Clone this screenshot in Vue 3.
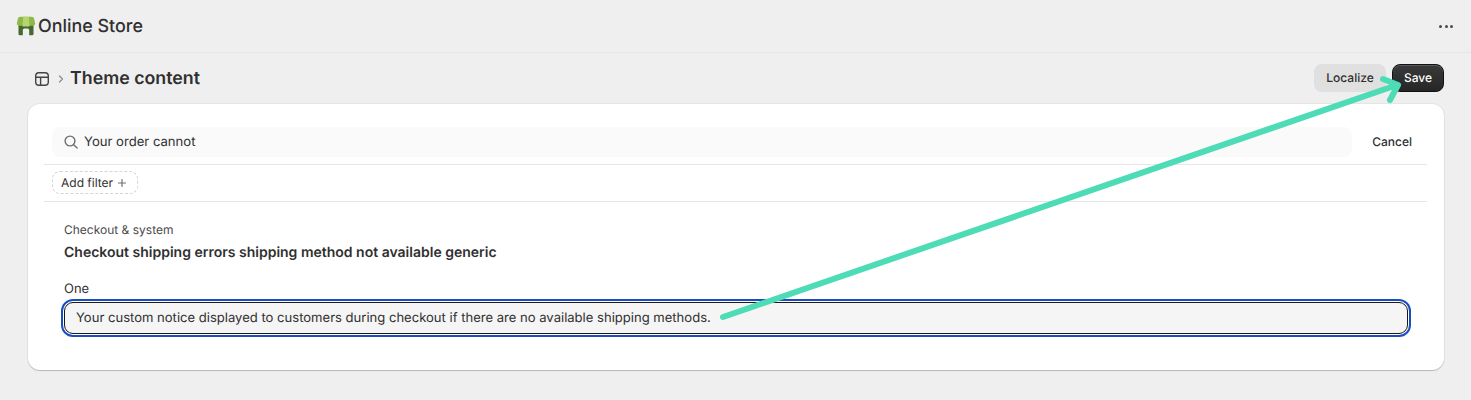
<script setup>
const query = 'Your order cannot'
const notice = 'Your custom notice displayed to customers during checkout if there are no available shipping methods.'
</script>

<template>
  <div class="page">
    <header class="topbar">
      <div class="brand">
        <svg class="store" viewBox="0 0 20 20" width="20" height="20">
          <path d="M2.500 9h15v8.900a1.300 1.300 0 0 1-1.300 1.300h-3v-5.200a1.500 1.500 0 0 0-1.500-1.500H8.300a1.500 1.500 0 0 0-1.500 1.500v5.200h-3a1.300 1.300 0 0 1-1.300-1.300z" fill="#47682c"/>
          <path d="M4.400 .8h11.200c1.300 0 2.200.7 2.500 1.900l1 4.300c.3 1.500-.8 2.800-2.300 2.800H3.200C1.700 9.800 .6 8.500 .9 7l1-4.300C2.200 1.500 3.100 .8 4.400 .8z" fill="#8fba4a"/>
          <path d="M7.200 .8h5.600l.7 9.800H6.500z" fill="#b5d56f"/>
        </svg>
        <span class="brand-name">Online Store</span>
      </div>
      <div class="dots" aria-label="More"><i></i><i></i><i></i></div>
    </header>

    <div class="crumbs">
      <div class="crumb-left">
        <svg class="theme-icon" viewBox="0 0 16 16" width="16" height="16" fill="none" stroke="#444" stroke-width="1.400">
          <rect x="1.700" y="1.700" width="12.600" height="12.600" rx="3.200"/>
          <path d="M1.700 6.300h12.600M6.600 6.300v8"/>
        </svg>
        <svg class="chev" viewBox="0 0 8 12" width="8" height="12" fill="none" stroke="#8a8a8a" stroke-width="1.200" stroke-linecap="round" stroke-linejoin="round">
          <path d="M2.500 3l3 3-3 3"/>
        </svg>
        <h1>Theme content</h1>
      </div>
      <div class="actions">
        <button class="btn localize">Localize</button>
        <button class="btn save">Save</button>
      </div>
    </div>

    <main class="card">
      <div class="search-row">
        <div class="search">
          <svg viewBox="0 0 16 16" width="16" height="16" fill="none" stroke="#6f6f6f" stroke-width="1.400" stroke-linecap="round">
            <circle cx="7" cy="7" r="4.900"/>
            <path d="M10.700 10.700l3.400 3.400"/>
          </svg>
          <span>{{ query }}</span>
        </div>
        <span class="cancel">Cancel</span>
      </div>
      <div class="filter-row">
        <span class="add-filter">Add filter
          <svg viewBox="0 0 10 10" width="10" height="10" fill="none" stroke="#6f6f6f" stroke-width="1.200" stroke-linecap="round"><path d="M5 1.500v7M1.500 5h7"/></svg>
        </span>
      </div>
      <section class="content">
        <p class="section">Checkout &amp; system</p>
        <h2>Checkout shipping errors shipping method not available generic</h2>
        <label class="label">One</label>
        <div class="field"><span>{{ notice }}</span></div>
      </section>
    </main>

    <svg class="arrow" viewBox="0 0 1471 400" width="1471" height="400" fill="none" stroke="#4edcb6" stroke-width="6" stroke-linecap="round" stroke-linejoin="round">
      <path d="M723 317L1397 85"/>
      <path d="M1383 79l15 6-8 15"/>
    </svg>
  </div>
</template>

<style>
html, body { margin: 0; background: #efefef; }
</style>

<style scoped>
.page {
  position: relative;
  width: 1471px;
  height: 400px;
  overflow: hidden;
  background: #efefef;
  color: #303030;
  font-family: Inter, "Liberation Sans", sans-serif;
  font-size: 13px;
  text-rendering: geometricPrecision;
}
.topbar {
  height: 53px;
  box-sizing: border-box;
  border-bottom: 1px solid #e6e6e6;
  display: flex;
  align-items: center;
  justify-content: space-between;
  padding: 0 18px 0 16px;
}
.brand { display: flex; align-items: center; gap: 2px; }
.brand-name { font-size: 17.900px; font-weight: 550; color: #303030; }
.dots { display: flex; gap: 2.500px; }
.dots i { width: 3px; height: 3px; border-radius: 50%; background: #4a4a4a; display: block; }
.crumbs {
  height: 51px;
  box-sizing: border-box;
  display: flex;
  align-items: center;
  justify-content: space-between;
  padding: 0 27px 1px 34px;
}
.crumb-left { display: flex; align-items: center; padding-top: 1px; }
.chev { margin: 0 5px 0 7px; }
h1 { margin: 0; font-size: 17.800px; line-height: 24px; font-weight: 600; color: #303030; }
.actions { display: flex; gap: 6px; }
.btn {
  height: 28px;
  box-sizing: border-box;
  border: 0;
  border-radius: 8px;
  font: 500 12px Inter, "Liberation Sans", sans-serif;
  text-rendering: geometricPrecision;
  padding: 0 0 2px;
}
.localize { width: 72px; background: #e0e0e0; color: #303030; }
.save {
  width: 52px;
  color: #fff;
  background: linear-gradient(#3a3a3a, #262626);
  border: 1px solid #111;
  box-shadow: inset 0 1px 0 #5a5a5a;
}
.card {
  margin: 0 27px 0 28px;
  height: 266px;
  box-sizing: border-box;
  background: #fff;
  border-radius: 12px;
  box-shadow: 0 1px 1px rgba(0,0,0,.2), 0 0 0 1px rgba(0,0,0,.04);
  padding: 23px 17px 0 16px;
}
.search-row {
  display: flex;
  align-items: flex-start;
  height: 38px;
  box-sizing: border-box;
  padding: 0 15px 0 8px;
  border-bottom: 1px solid #e6e6e6;
}
.search {
  flex: 1;
  height: 30px;
  background: #fafafa;
  border-radius: 8px;
  display: flex;
  align-items: center;
  gap: 5px;
  padding-left: 11px;
  font-size: 13.100px;
  color: #303030;
}
.cancel { margin-left: 20px; line-height: 30px; font-size: 12px; font-weight: 500; color: #303030; }
.filter-row {
  height: 37px;
  box-sizing: border-box;
  border-bottom: 1px solid #e6e6e6;
  padding: 6px 0 0 8px;
}
.add-filter {
  display: inline-flex;
  align-items: center;
  gap: 4px;
  height: 23px;
  box-sizing: border-box;
  width: 86px;
  padding-left: 8px;
  border: 1px dashed #d4d4d4;
  border-radius: 8px;
  font-size: 12px;
  font-weight: 400;
}
.content { padding: 20px 19px 0 20px; }
.section { margin: 0; font-size: 12px; line-height: 16px; color: #4a4a4a; }
h2 { margin: 5px 0 0; font-size: 14px; line-height: 20px; font-weight: 600; color: #303030; }
.label { display: block; margin-top: 17px; font-size: 13px; line-height: 18px; color: #303030; }
.field {
  margin-top: 4px;
  height: 32px;
  box-sizing: border-box;
  border: 1px solid #1a1a1a;
  border-radius: 9px;
  outline: 2px solid #1a4cc4;
  outline-offset: 1px;
  background: #f5f5f5;
  display: flex;
  align-items: center;
  padding-left: 11px;
  font-size: 13.060px;
  color: #303030;
}
.arrow { position: absolute; left: 0; top: 0; pointer-events: none; }
</style>
